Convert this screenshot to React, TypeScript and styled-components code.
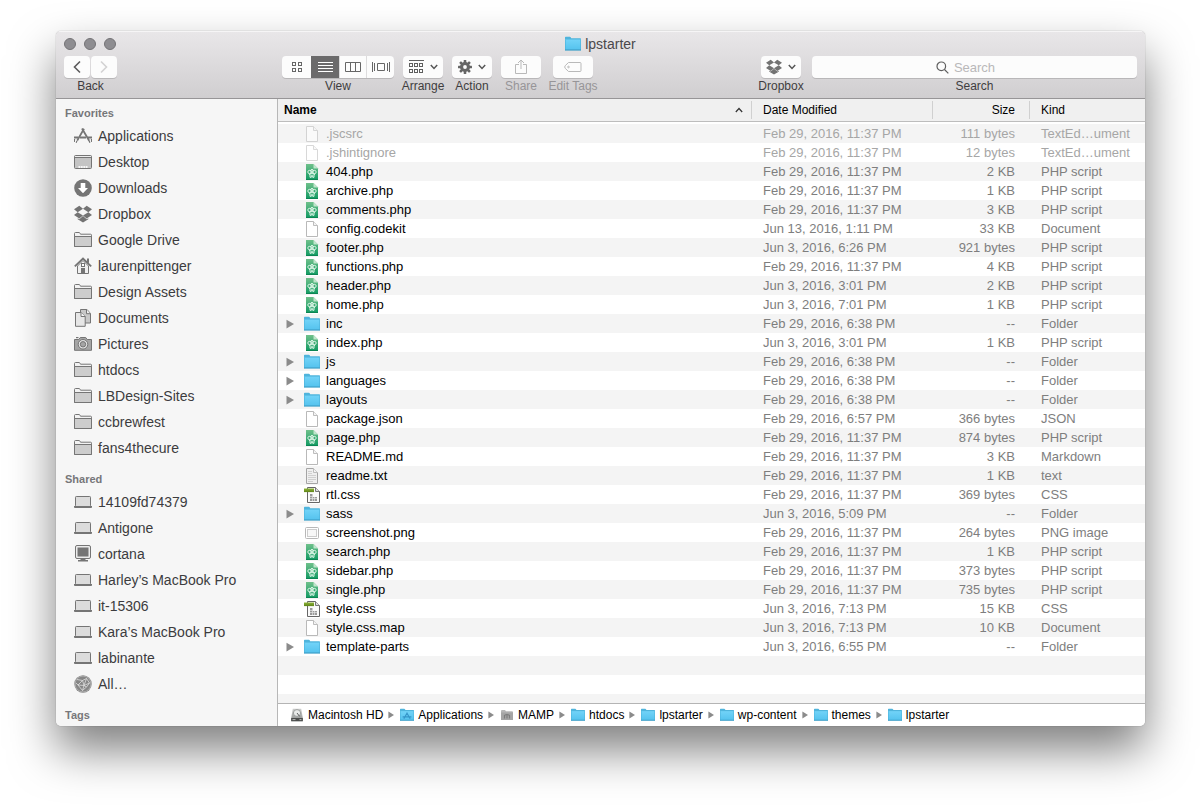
import React from "react";
import styled, { createGlobalStyle } from "styled-components";

const GlobalStyle = createGlobalStyle`
  *, *::before, *::after { box-sizing: border-box; }
  body {
    margin: 0;
    background: #fff;
    font-family: "Liberation Sans", Arial, Helvetica, sans-serif;
    color: #000;
  }
  button, input { font: inherit; color: inherit; }
`;

/* ---------- layout ---------- */

const Page = styled.div`
  min-height: 100vh;
  padding: 31px 56px 80px;
  display: flex;
`;

const Window = styled.main`
  flex: 1;
  min-width: 0;
  display: flex;
  flex-direction: column;
  border-radius: 5px;
  overflow: hidden;
  background: #fff;
  box-shadow: 0 24px 46px rgba(0, 0, 0, 0.5), 0 0 1px rgba(0, 0, 0, 0.5);
`;

const Chrome = styled.header`
  background: linear-gradient(#e9e7e9, #d0ced0);
  border-bottom: 1px solid #979597;
  box-shadow: inset 0 1px 0 #f6f5f6;
  padding-bottom: 4px;
`;

const TitleBar = styled.div`
  height: 25px;
  padding: 0 8px;
  display: grid;
  grid-template-columns: 1fr auto 1fr;
  align-items: center;
`;

const Lights = styled.div`
  display: flex;
  gap: 8px;
`;

const Light = styled.button`
  width: 12px;
  height: 12px;
  padding: 0;
  border: 1px solid #747376;
  border-radius: 50%;
  background: #8e8d91;
`;

const Title = styled.h1`
  margin: 0;
  display: flex;
  align-items: center;
  gap: 4px;
  font-size: 14px;
  line-height: 16px;
  font-weight: 400;
  color: #4a484b;
`;

const Toolbar = styled.div`
  display: flex;
  gap: 9px;
  padding-right: 8px;
`;

const NavSlot = styled.div`
  flex: none;
  width: 217px;
  padding-left: 8px;
  display: flex;
`;

const Tool = styled.div<{ $width?: number; $push?: boolean }>`
  flex: none;
  width: ${(p) => (p.$width ? `${p.$width}px` : "auto")};
  margin-left: ${(p) => (p.$push ? "auto" : "0")};
  display: flex;
  flex-direction: column;
  align-items: center;
`;

const SearchTool = styled(Tool)`
  flex: 0 1 327px;
  padding-left: 2px;
  align-items: stretch;
  text-align: center;
`;

const ToolLabel = styled.label<{ $dim?: boolean }>`
  font-size: 12px;
  line-height: 16px;
  white-space: nowrap;
  color: ${(p) => (p.$dim ? "#979598" : "#3f3d40")};
`;

const ButtonRow = styled.div<{ $gap?: number }>`
  display: flex;
  gap: ${(p) => p.$gap ?? 0}px;
`;

const ToolButton = styled.button<{ $width: number }>`
  width: ${(p) => p.$width}px;
  height: 22px;
  padding: 0;
  border: 0;
  border-radius: 4px;
  background: #fcfcfc;
  box-shadow: 0 1px 0 rgba(0, 0, 0, 0.14);
  display: flex;
  align-items: center;
  justify-content: center;
  gap: 6px;
`;

const Segment = styled(ToolButton)<{ $active?: boolean }>`
  border-radius: 0;
  background: ${(p) => (p.$active ? "#6b6a6b" : "#fcfcfc")};
  border-left: 1px solid ${(p) => (p.$active ? "#6b6a6b" : "#dddcdd")};
  &:first-child { border-radius: 4px 0 0 4px; border-left: 0; }
  &:last-child { border-radius: 0 4px 4px 0; }
`;

const SearchBox = styled.div`
  position: relative;
  height: 22px;
  svg {
    position: absolute;
    left: calc(50% - 39px);
    top: 5px;
    pointer-events: none;
  }
`;

const SearchInput = styled.input`
  appearance: none;
  width: 100%;
  height: 22px;
  padding: 0 24px;
  border: 0;
  border-radius: 4px;
  background: #fcfcfc;
  box-shadow: 0 1px 0 rgba(0, 0, 0, 0.14);
  font-size: 13px;
  text-align: center;
  &::placeholder { color: #b9b8b9; opacity: 1; }
  &::-webkit-search-cancel-button { display: none; }
`;

const Body = styled.div`
  flex: 1;
  display: flex;
  min-height: 0;
`;

/* ---------- sidebar ---------- */

const Sidebar = styled.nav`
  flex: none;
  width: 222px;
  padding-top: 4px;
  display: flex;
  flex-direction: column;
  gap: 8px;
  background: #f6f6f6;
  border-right: 1px solid #b7b7b7;
`;

const SectionTitle = styled.h2`
  margin: 0;
  padding-left: 9px;
  font-size: 11px;
  line-height: 20px;
  font-weight: 700;
  color: #77777a;
`;

const PlaceList = styled.ul`
  list-style: none;
  margin: 0;
  padding: 0;
`;

const Place = styled.a`
  height: 26px;
  padding-left: 18px;
  display: flex;
  align-items: center;
  gap: 6px;
  font-size: 14px;
  line-height: 16px;
  color: #3c3c3e;
  text-decoration: none;
`;

/* ---------- file list ---------- */

const Content = styled.section`
  flex: 1;
  min-width: 0;
  display: flex;
  flex-direction: column;
`;

const FileTable = styled.table`
  width: 100%;
  table-layout: fixed;
  border-spacing: 0;
  tbody::before {
    content: "";
    display: block;
    height: 2px;
  }
`;

const Column = styled.col<{ $width?: number }>`
  width: ${(p) => (p.$width ? `${p.$width}px` : "auto")};
`;

const HeadCell = styled.th`
  height: 23px;
  padding: 0 0 1px;
  background: #f0f0f0;
  border-bottom: 1px solid #bdbdbd;
  font-size: 12px;
  line-height: 18px;
  text-align: left;
`;

const HeadLabel = styled.div<{ $plain?: boolean; $right?: boolean }>`
  display: flex;
  align-items: center;
  justify-content: ${(p) => (p.$right ? "flex-end" : "space-between")};
  height: 18px;
  padding: ${(p) => (p.$right ? "0 14px 0 0" : p.$plain ? "0 0 0 11px" : "0 8px 0 6px")};
  border-left: ${(p) => (p.$plain ? "1px solid #d0d0d0" : "0")};
  font-weight: ${(p) => (p.$plain ? 400 : 700)};
`;

const Row = styled.tr<{ $dim?: boolean }>`
  color: ${(p) => (p.$dim ? "#a6a6a6" : "#7e7e7e")};
  &:nth-child(odd) { background: #f4f4f4; }
  th { color: ${(p) => (p.$dim ? "#a6a6a6" : "#000")}; }
  th svg { opacity: ${(p) => (p.$dim ? 0.55 : 1)}; }
`;

const Cell = styled.td<{ $right?: boolean }>`
  height: 19px;
  padding: ${(p) => (p.$right ? "0 14px 0 0" : "0 0 0 12px")};
  font-size: 13px;
  line-height: 19px;
  white-space: nowrap;
  text-align: ${(p) => (p.$right ? "right" : "left")};
`;

const NameCell = styled.th`
  padding: 0;
  font-size: 13px;
  line-height: 19px;
  font-weight: 400;
  text-align: left;
`;

const NameLine = styled.div`
  height: 19px;
  padding-left: 8px;
  display: grid;
  grid-template-columns: 8px 16px 1fr;
  column-gap: 10px;
  align-items: center;
`;

const FileName = styled.span`
  margin-left: -4px;
`;

const Disclosure = styled.button`
  width: 8px;
  height: 10px;
  padding: 0;
  border: 0;
  background: none;
  display: flex;
`;

const EmptyRows = styled.div`
  flex: 1;
  background: repeating-linear-gradient(#f4f4f4 0 19px, #fff 19px 38px);
`;

const PathBar = styled.ol`
  list-style: none;
  margin: 0;
  height: 23px;
  padding: 0 12px;
  display: flex;
  align-items: center;
  gap: 6px;
  border-top: 1px solid #b4b4b4;
  background: #fff;
  font-size: 12px;
  line-height: 16px;
`;

const Crumb = styled.li`
  display: flex;
  align-items: center;
  gap: 5px;
`;

const CrumbLink = styled.a`
  display: flex;
  align-items: center;
  gap: 4px;
  color: #000;
  text-decoration: none;
`;

/* ---------- icons ---------- */

const Glyph = styled.svg`
  display: block;
  flex: none;
`;

const SharedDefs = styled.svg`
  position: absolute;
`;

const Defs = () => (
  <SharedDefs width="0" height="0" aria-hidden="true">
    <defs>
      <linearGradient id="blue" x1="0" y1="0" x2="0" y2="1">
        <stop offset="0" stopColor="#72d3f8" />
        <stop offset="1" stopColor="#55c3ee" />
      </linearGradient>
      <linearGradient id="green" x1="0" y1="0" x2="0" y2="1">
        <stop offset="0" stopColor="#6fc08b" />
        <stop offset="1" stopColor="#109a62" />
      </linearGradient>
      <linearGradient id="olive" x1="0" y1="0" x2="0" y2="1">
        <stop offset="0" stopColor="#8fb53a" />
        <stop offset="1" stopColor="#5d8316" />
      </linearGradient>
      <linearGradient id="metal" x1="0" y1="0" x2="0" y2="1">
        <stop offset="0" stopColor="#cfd0cf" />
        <stop offset="1" stopColor="#8d908f" />
      </linearGradient>
    </defs>
  </SharedDefs>
);

const BlueFolder = ({ size = 16, apps = false }: { size?: number; apps?: boolean }) => (
  <Glyph width={size} height={size} viewBox="0 0 16 16">
    <path d="M0 1.5q0-.7.7-.7h4.2q.5 0 .8.5l.5.9h9.1q.7 0 .7.7v11.3H0z" fill="#4fb4dc" />
    <path d="M0 3.6h16v10H0z" fill="url(#blue)" />
    <path d="M.5 3.6v10.500M15.500 3.600v10.500" stroke="#4bb0d8" strokeOpacity=".6" />
    <path d="M0 14h16" stroke="#3c9dc6" />
    {apps && (
      <path d="M4.4 12.200L8.300 5.400M7.700 5.400l3.900 6.800M3 10.200h10" stroke="#3596c9" strokeWidth="1.3" fill="none" />
    )}
  </Glyph>
);

const PageIcon = ({ text = false }: { text?: boolean }) => (
  <Glyph width="16" height="16" viewBox="0 0 16 16">
    <path
      d="M2.5.5h7l4 4v11h-11z"
      fill={text ? "#efefef" : "#fff"}
      stroke={text ? "#a4a4a4" : "#b9b9b9"}
    />
    <path d="M9.5.5v4h4" fill="#f4f4f4" stroke="#bdbdbd" />
    {text && (
      <path d="M4 3.5h4M4 5.5h4M4 7.5h8M4 9.5h8M4 11.5h8M4 13.5h5" stroke="#d0d0d0" />
    )}
  </Glyph>
);

const PhpIcon = () => (
  <Glyph width="16" height="16" viewBox="0 0 16 16">
    <path d="M2 0h7.5L14 4.5V16H2z" fill="url(#green)" />
    <path d="M9.5 0L14 4.5H9.5z" fill="#bfe5cb" />
    <path d="M2 15.5h12" stroke="#0c8553" />
    <g fill="none" stroke="#d9f3e4">
      <ellipse cx="5.8" cy="8" rx="2" ry="1.7" />
      <ellipse cx="10.2" cy="8" rx="2" ry="1.7" />
      <ellipse cx="8" cy="7.6" rx="1.3" ry="2.4" />
      <path d="M6 9.6v3.7h1.300v-1.600h1.400v1.600H10V9.600M5 9.800l1 1.200M11 9.800L10 11" />
    </g>
  </Glyph>
);

const CssIcon = () => (
  <Glyph width="16" height="16" viewBox="0 0 16 16">
    <path d="M3.5.5h8l4 4v11h-12z" fill="#fafafa" stroke="#666" />
    <path d="M11.5.5v4h4" fill="#ddd" stroke="#777" />
    <path d="M0 1.5h10v3.600H0z" fill="url(#olive)" />
    <path d="M6 7h3v3h4v4H6z" fill="#9a9a9a" />
    <path d="M6 9.500h3M6 11.500h7M8.500 7v7M10.500 10v4" stroke="#e4e4e4" strokeWidth=".7" />
  </Glyph>
);

const ImageIcon = () => (
  <Glyph width="16" height="16" viewBox="0 0 16 16">
    <rect x="1.5" y="2.5" width="13" height="11" rx="1" fill="#fff" stroke="#b8b8b8" />
    <rect x="3.5" y="4.5" width="9" height="7" fill="#f7f7f7" stroke="#cdcdcd" />
  </Glyph>
);

const DriveIcon = () => (
  <Glyph width="14" height="14" viewBox="0 0 14 14">
    <path d="M2.8.8h8.4l1.6 9.2v3.2H1.2V10z" fill="url(#metal)" />
    <ellipse cx="7" cy="5" rx="3.6" ry="3.4" fill="#e9ebea" stroke="#8c8f8e" strokeWidth=".8" />
    <path d="M7 5l2.6 3.4" stroke="#5a5c5b" />
    <path d="M1.2 10h11.6v3.2H1.2z" fill="#4b4d4c" />
    <path d="M2.5 11.6h3M9.5 11.6h2" stroke="#b9bbba" />
  </Glyph>
);

const MampIcon = () => (
  <Glyph width="14" height="14" viewBox="0 0 14 14">
    <path d="M1 3q0-1 1-1h3l1 1.2h6q1 0 1 1V12H1z" fill="#b6b6b6" />
    <path d="M1 4.5h12V12H1z" fill="#a5a5a5" />
    <path d="M4.5 10.5V7.5q2.5-2 5 0v3M7 7v3.5" stroke="#7d7d7d" strokeWidth="1.2" fill="none" />
  </Glyph>
);

const Triangle = ({ width = 8, height = 10 }: { width?: number; height?: number }) => (
  <Glyph width={width} height={height} viewBox="0 0 8 10" preserveAspectRatio="none">
    <path d="M.5.7v8.800L8 5.100z" fill="#8b8b8b" />
  </Glyph>
);

const dropboxPath =
  "M7.06 1L0 5.61l4.88 3.91L12 5.13zM0 13.43l7.06 4.61L12 13.91 4.88 9.52zM12 13.91l4.94 4.13L24 13.43l-4.88-3.91zM24 5.61L16.94 1 12 5.13l7.12 4.39zM12.01 14.8l-4.95 4.11-2.12-1.38v1.55l7.07 4.24 7.08-4.24v-1.55l-2.12 1.38z";

const DropboxIcon = ({ size = 18 }: { size?: number }) => (
  <Glyph width={size} height={size} viewBox="0 0 24 24">
    <path d={dropboxPath} fill="#737373" />
  </Glyph>
);

const placeShapes: Record<string, React.ReactNode> = {
  apps: (
    <g fill="none" stroke="#757575" strokeWidth="1.8">
      <path d="M10 1.8L3.2 13.6M8 1.5l7.2 12.3" />
      <path d="M0 10.5h4.4M6 10.5h6M13.8 10.5H18" />
      <path d="M2.2 15.8l.7-1.8M15.9 15.8l-.8-2M.6 12l-.3 3M17.4 12l.3 3" strokeWidth="1.2" />
    </g>
  ),
  desktop: (
    <g>
      <rect x=".5" y="2.5" width="17" height="13" rx="1" fill="#c4c4c4" stroke="#757575" />
      <path d="M1 4.5h16" stroke="#757575" />
      <path d="M1 3.5h16" stroke="#eee" />
      <path d="M4.500 14h9" stroke="#f6f6f6" strokeWidth="2" strokeDasharray="1.800 .6" />
    </g>
  ),
  downloads: (
    <g>
      <circle cx="9" cy="9" r="8.8" fill="#757575" />
      <path d="M6.7 4h4.6v5h2.7L9 14.3 4 9h2.7z" fill="#fff" />
    </g>
  ),
  folder: (
    <g stroke="#757575">
      <path d="M.5 15.5v-13q0-1 1-1H5q.7 0 1 .7l.5 1h10q1 0 1 1v11.3z" fill="#f2f2f2" />
      <path d="M.5 5.5h17v10H.5z" fill="#cdcdcd" />
    </g>
  ),
  home: (
    <g>
      <path d="M3.5 9v7.5h11V9L9 3.5z" fill="#f0f0f0" stroke="#757575" />
      <path d="M.8 9.3L9 1.6l8.2 7.7" fill="none" stroke="#757575" strokeWidth="1.8" />
      <path d="M13 1.5h2v5L13 4.6z" fill="#757575" />
      <rect x="7.5" y="6.5" width="3" height="3" fill="#fff" stroke="#757575" />
      <path d="M7 11h4v6H7z" fill="#757575" />
    </g>
  ),
  documents: (
    <g stroke="#757575">
      <path d="M6.5 1v13h10V4.5L13 .5H6.5z" fill="#c8c8c8" />
      <path d="M12.5.5v4.2h4" fill="#eee" />
      <path d="M1.5 3.5h5.7l4 4v9.8H1.5z" fill="#e6e6e6" />
      <path d="M7 3.5v4h4.2" fill="#f6f6f6" />
    </g>
  ),
  camera: (
    <g>
      <path d="M.5 4.5h4.3l1.5-2h5.4l1.5 2h4.3v10.8H.5z" fill="#a5a5a5" stroke="#757575" />
      <path d="M2 2.6h2.5" stroke="#757575" strokeWidth="1.2" />
      <circle cx="9" cy="9.3" r="4.8" fill="#e3e3e3" stroke="#757575" />
      <circle cx="9" cy="9.3" r="2.7" fill="#a5a5a5" stroke="#757575" />
    </g>
  ),
  laptop: (
    <g>
      <rect x="1.5" y="3.5" width="15" height="10" rx=".8" fill="#dcdcdc" stroke="#757575" />
      <path d="M0 13h18v1.2q0 .8-1 .8H1q-1 0-1-.8z" fill="#757575" />
    </g>
  ),
  display: (
    <g>
      <rect x="1.5" y=".5" width="15" height="13" rx="1.5" fill="#ececec" stroke="#757575" />
      <rect x="3.5" y="2.5" width="11" height="9" fill="#757575" />
      <path d="M6.5 14h5v1H14v1.5H4V15h2.5z" fill="#757575" />
    </g>
  ),
  network: (
    <g>
      <circle cx="9" cy="9" r="8.7" fill="#868686" />
      <circle cx="9" cy="9" r="7.9" fill="none" stroke="#b5b5b5" strokeWidth=".8" />
      <path
        d="M3 4.5l5.5 1 4-2M8.5 5.5L4 10l4.5 5.5 4-3.5 3-4-3-4.5-2.500 7 2.500 1.500M4 10l-2-2M8.500 5.500l1.500 5-6-.5M8.500 15.500L10 10.500l5.500-2.500"
        stroke="#dedede"
        strokeWidth=".8"
        fill="none"
      />
    </g>
  ),
};

const PlaceIcon = ({ name }: { name: string }) =>
  name === "dropbox" ? (
    <DropboxIcon />
  ) : (
    <Glyph width="18" height="18" viewBox="0 0 18 18">{placeShapes[name]}</Glyph>
  );

const Chevron = () => (
  <Glyph width="8" height="6" viewBox="0 0 8 6">
    <path d="M.8 1L4 4.5 7.2 1" fill="none" stroke="#565656" strokeWidth="1.5" />
  </Glyph>
);

const gridSquares = (xs: number[], ys: number[], w: number, h: number) =>
  ys.flatMap((y) => xs.map((x) => <rect key={`${x}-${y}`} x={x} y={y} width={w} height={h} />));

const fileIcons: Record<string, React.ReactNode> = {
  page: <PageIcon />,
  text: <PageIcon text />,
  php: <PhpIcon />,
  css: <CssIcon />,
  image: <ImageIcon />,
  folder: <BlueFolder />,
};

/* ---------- data ---------- */

const favorites = [
  ["apps", "Applications"],
  ["desktop", "Desktop"],
  ["downloads", "Downloads"],
  ["dropbox", "Dropbox"],
  ["folder", "Google Drive"],
  ["home", "laurenpittenger"],
  ["folder", "Design Assets"],
  ["documents", "Documents"],
  ["camera", "Pictures"],
  ["folder", "htdocs"],
  ["folder", "LBDesign-Sites"],
  ["folder", "ccbrewfest"],
  ["folder", "fans4thecure"],
];

const shared = [
  ["laptop", "14109fd74379"],
  ["laptop", "Antigone"],
  ["display", "cortana"],
  ["laptop", "Harley’s MacBook Pro"],
  ["laptop", "it-15306"],
  ["laptop", "Kara’s MacBook Pro"],
  ["laptop", "labinante"],
  ["network", "All…"],
];

const sections: [string, string[][]][] = [
  ["Favorites", favorites],
  ["Shared", shared],
  ["Tags", []],
];

type FileRow = [icon: string, name: string, modified: string, size: string, kind: string];

const files: FileRow[] = [
  ["page", ".jscsrc", "Feb 29, 2016, 11:37 PM", "111 bytes", "TextEd…ument"],
  ["page", ".jshintignore", "Feb 29, 2016, 11:37 PM", "12 bytes", "TextEd…ument"],
  ["php", "404.php", "Feb 29, 2016, 11:37 PM", "2 KB", "PHP script"],
  ["php", "archive.php", "Feb 29, 2016, 11:37 PM", "1 KB", "PHP script"],
  ["php", "comments.php", "Feb 29, 2016, 11:37 PM", "3 KB", "PHP script"],
  ["page", "config.codekit", "Jun 13, 2016, 1:11 PM", "33 KB", "Document"],
  ["php", "footer.php", "Jun 3, 2016, 6:26 PM", "921 bytes", "PHP script"],
  ["php", "functions.php", "Feb 29, 2016, 11:37 PM", "4 KB", "PHP script"],
  ["php", "header.php", "Jun 3, 2016, 3:01 PM", "2 KB", "PHP script"],
  ["php", "home.php", "Jun 3, 2016, 7:01 PM", "1 KB", "PHP script"],
  ["folder", "inc", "Feb 29, 2016, 6:38 PM", "--", "Folder"],
  ["php", "index.php", "Jun 3, 2016, 3:01 PM", "1 KB", "PHP script"],
  ["folder", "js", "Feb 29, 2016, 6:38 PM", "--", "Folder"],
  ["folder", "languages", "Feb 29, 2016, 6:38 PM", "--", "Folder"],
  ["folder", "layouts", "Feb 29, 2016, 6:38 PM", "--", "Folder"],
  ["page", "package.json", "Feb 29, 2016, 6:57 PM", "366 bytes", "JSON"],
  ["php", "page.php", "Feb 29, 2016, 11:37 PM", "874 bytes", "PHP script"],
  ["page", "README.md", "Feb 29, 2016, 11:37 PM", "3 KB", "Markdown"],
  ["text", "readme.txt", "Feb 29, 2016, 11:37 PM", "1 KB", "text"],
  ["css", "rtl.css", "Feb 29, 2016, 11:37 PM", "369 bytes", "CSS"],
  ["folder", "sass", "Jun 3, 2016, 5:09 PM", "--", "Folder"],
  ["image", "screenshot.png", "Feb 29, 2016, 11:37 PM", "264 bytes", "PNG image"],
  ["php", "search.php", "Feb 29, 2016, 11:37 PM", "1 KB", "PHP script"],
  ["php", "sidebar.php", "Feb 29, 2016, 11:37 PM", "373 bytes", "PHP script"],
  ["php", "single.php", "Feb 29, 2016, 11:37 PM", "735 bytes", "PHP script"],
  ["css", "style.css", "Jun 3, 2016, 7:13 PM", "15 KB", "CSS"],
  ["page", "style.css.map", "Jun 3, 2016, 7:13 PM", "10 KB", "Document"],
  ["folder", "template-parts", "Jun 3, 2016, 6:55 PM", "--", "Folder"],
];

const crumbs: [string, React.ReactNode][] = [
  ["Macintosh HD", <DriveIcon />],
  ["Applications", <BlueFolder size={14} apps />],
  ["MAMP", <MampIcon />],
  ["htdocs", <BlueFolder size={14} />],
  ["lpstarter", <BlueFolder size={14} />],
  ["wp-content", <BlueFolder size={14} />],
  ["themes", <BlueFolder size={14} />],
  ["lpstarter", <BlueFolder size={14} />],
];

/* ---------- window parts ---------- */

const WindowToolbar = () => (
  <Toolbar>
    <NavSlot>
      <Tool>
        <ButtonRow $gap={1}>
          <ToolButton id="back" $width={26} aria-label="Back">
            <Glyph width="8" height="14" viewBox="0 0 8 14">
              <path d="M7 1.5L1.5 7 7 12.5" fill="none" stroke="#5c5b5c" strokeWidth="1.6" />
            </Glyph>
          </ToolButton>
          <ToolButton $width={26} aria-label="Forward" disabled>
            <Glyph width="8" height="14" viewBox="0 0 8 14">
              <path d="M1 1.5L6.5 7 1 12.5" fill="none" stroke="#d3d2d3" strokeWidth="1.6" />
            </Glyph>
          </ToolButton>
        </ButtonRow>
        <ToolLabel htmlFor="back">Back</ToolLabel>
      </Tool>
    </NavSlot>

    <Tool>
      <ButtonRow>
        <Segment $width={29} aria-label="Icons">
          <Glyph width="12" height="12" viewBox="0 0 12 12" fill="none" stroke="#666">
            {gridSquares([1.5, 7.5], [1.5, 7.5], 3, 3)}
          </Glyph>
        </Segment>
        <Segment id="view" $width={28} $active aria-label="List">
          <Glyph width="15" height="12" viewBox="0 0 15 12">
            <path d="M0 1.5h15M0 4.5h15M0 7.5h15M0 10.5h15" stroke="#fff" />
          </Glyph>
        </Segment>
        <Segment $width={27} aria-label="Columns">
          <Glyph width="16" height="10" viewBox="0 0 16 10" fill="none" stroke="#666">
            <path d="M.5.5h15v9H.5zM5.5.5v9M10.5.5v9" />
          </Glyph>
        </Segment>
        <Segment $width={28} aria-label="Cover Flow">
          <Glyph width="18" height="10" viewBox="0 0 18 10" fill="none" stroke="#666">
            <path d="M.5 0v10M2.5 1v8M5.5 1.5h7v7h-7zM15.5 1v8M17.5 0v10" />
          </Glyph>
        </Segment>
      </ButtonRow>
      <ToolLabel htmlFor="view">View</ToolLabel>
    </Tool>

    <Tool $width={40}>
      <ToolButton id="arrange" $width={40}>
        <Glyph width="15" height="14" viewBox="0 0 15 14" fill="none" stroke="#5e5e5e">
          <path d="M0 .5h15" />
          {gridSquares([0.5, 5.5, 10.5], [3.5, 9.5], 3, 3)}
        </Glyph>
        <Chevron />
      </ToolButton>
      <ToolLabel htmlFor="arrange">Arrange</ToolLabel>
    </Tool>

    <Tool $width={40}>
      <ToolButton id="action" $width={40}>
        <Glyph width="14" height="14" viewBox="0 0 14 14">
          <g fill="#666">
            {[0, 45, 90, 135].map((a) => (
              <rect key={a} x="5.7" y="0" width="2.6" height="14" rx=".5" transform={`rotate(${a} 7 7)`} />
            ))}
            <circle cx="7" cy="7" r="5" />
          </g>
          <circle cx="7" cy="7" r="1.9" fill="#fcfcfc" />
        </Glyph>
        <Chevron />
      </ToolButton>
      <ToolLabel htmlFor="action">Action</ToolLabel>
    </Tool>

    <Tool $width={40}>
      <ToolButton id="share" $width={40} disabled>
        <Glyph width="12" height="16" viewBox="0 0 12 16" fill="none" stroke="#b9b9b9">
          <path d="M4 5.5H.5v9h11v-9H8M6 10V1M3 4l3-3 3 3" />
        </Glyph>
      </ToolButton>
      <ToolLabel htmlFor="share" $dim>Share</ToolLabel>
    </Tool>

    <Tool $width={46}>
      <ToolButton id="tags" $width={40} disabled>
        <Glyph width="18" height="12" viewBox="0 0 18 12" fill="none" stroke="#b9b9b9">
          <path d="M4.5 1.5H16q1 0 1 1v7q0 1-1 1H4.500L1.200 7.300Q.2 6 1.200 4.700z" />
          <circle cx="4.5" cy="6" r=".8" />
        </Glyph>
      </ToolButton>
      <ToolLabel htmlFor="tags" $dim>Edit Tags</ToolLabel>
    </Tool>

    <Tool $width={40} $push>
      <ToolButton id="dropbox" $width={40}>
        <DropboxIcon size={16} />
        <Chevron />
      </ToolButton>
      <ToolLabel htmlFor="dropbox">Dropbox</ToolLabel>
    </Tool>

    <SearchTool>
      <SearchBox>
        <SearchInput id="search" type="search" placeholder="Search" />
        <Glyph width="13" height="13" viewBox="0 0 13 13" fill="none" stroke="#5f5f5f" strokeWidth="1.2">
          <circle cx="5.3" cy="5.3" r="4.3" />
          <path d="M8.5 8.5l3.8 3.8" />
        </Glyph>
      </SearchBox>
      <ToolLabel htmlFor="search">Search</ToolLabel>
    </SearchTool>
  </Toolbar>
);

const FileList = () => (
  <FileTable>
    <colgroup>
      <Column />
      <Column $width={181} />
      <Column $width={97} />
      <Column $width={116} />
    </colgroup>
    <thead>
      <tr>
        <HeadCell scope="col" aria-sort="ascending">
          <HeadLabel>
            Name
            <Glyph width="8" height="6" viewBox="0 0 8 6">
              <path d="M.8 5L4 1.5 7.2 5" fill="none" stroke="#333" strokeWidth="1.2" />
            </Glyph>
          </HeadLabel>
        </HeadCell>
        <HeadCell scope="col"><HeadLabel $plain>Date Modified</HeadLabel></HeadCell>
        <HeadCell scope="col"><HeadLabel $plain $right>Size</HeadLabel></HeadCell>
        <HeadCell scope="col"><HeadLabel $plain>Kind</HeadLabel></HeadCell>
      </tr>
    </thead>
    <tbody>
      {files.map(([icon, name, modified, size, kind]) => (
        <Row key={name} $dim={name.startsWith(".")}>
          <NameCell scope="row">
            <NameLine>
              {icon === "folder" ? (
                <Disclosure aria-label={`Expand ${name}`}><Triangle /></Disclosure>
              ) : (
                <span />
              )}
              {fileIcons[icon]}
              <FileName>{name}</FileName>
            </NameLine>
          </NameCell>
          <Cell>{modified}</Cell>
          <Cell $right>{size}</Cell>
          <Cell>{kind}</Cell>
        </Row>
      ))}
    </tbody>
  </FileTable>
);

export default function App() {
  return (
    <Page>
      <GlobalStyle />
      <Defs />
      <Window>
        <Chrome>
          <TitleBar>
            <Lights>
              <Light aria-label="Close" />
              <Light aria-label="Minimize" />
              <Light aria-label="Zoom" />
            </Lights>
            <Title>
              <BlueFolder />
              lpstarter
            </Title>
          </TitleBar>
          <WindowToolbar />
        </Chrome>
        <Body>
          <Sidebar>
            {sections.map(([title, places]) => (
              <div key={title}>
                <SectionTitle>{title}</SectionTitle>
                {places.length > 0 && (
                  <PlaceList>
                    {places.map(([icon, label]) => (
                      <li key={label}>
                        <Place href="#">
                          <PlaceIcon name={icon} />
                          {label}
                        </Place>
                      </li>
                    ))}
                  </PlaceList>
                )}
              </div>
            ))}
          </Sidebar>
          <Content>
            <FileList />
            <EmptyRows />
            <PathBar>
              {crumbs.map(([label, icon], i) => (
                <Crumb key={i}>
                  <CrumbLink href="#">
                    {icon}
                    {label}
                  </CrumbLink>
                  {i < crumbs.length - 1 && <Triangle width={6} height={8} />}
                </Crumb>
              ))}
            </PathBar>
          </Content>
        </Body>
      </Window>
    </Page>
  );
}
